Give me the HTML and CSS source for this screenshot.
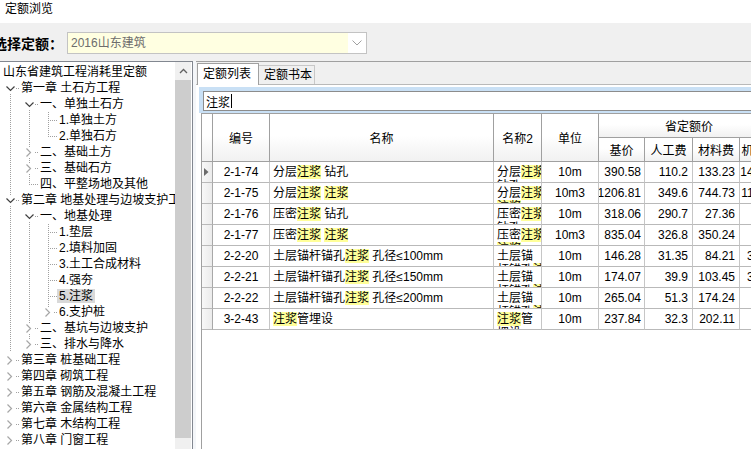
FILE: index.html
```html
<!DOCTYPE html>
<html lang="zh-CN">
<head>
<meta charset="utf-8">
<title>定额浏览</title>
<link rel="stylesheet" href="styles.css">
</head>
<body>
<div class="titlebar">定额浏览</div>
<div class="selectrow">
  <span class="sel-label">选择定额：</span>
  <div class="combo">
    <div class="combo-field">2016山东建筑</div>
    <div class="combo-btn"><svg width="10" height="6" viewBox="0 0 10 6"><path d="M0.5 0.5 5 5 9.5 0.5" fill="none" stroke="#a0a0a0" stroke-width="1"/></svg></div>
  </div>
</div>
<div class="main">
  <div class="treepanel">
    <div class="tree">
      <div class="row root"><span class="t">山东省建筑工程消耗里定额</span></div>
      <div class="row"><span class="c dh"><svg class="chev" width="9" height="9" viewBox="0 0 9 9"><path d="M0.5 2.5 4.5 6.5 8.5 2.5" fill="none" stroke="#404040" stroke-width="1.2"/></svg></span><span class="t">第一章 土石方工程</span></div>
      <div class="row"><span class="c v"></span><span class="c dh"><svg class="chev" width="9" height="9" viewBox="0 0 9 9"><path d="M0.5 2.5 4.5 6.5 8.5 2.5" fill="none" stroke="#404040" stroke-width="1.2"/></svg></span><span class="t">一、单独土石方</span></div>
      <div class="row"><span class="c v"></span><span class="c v"></span><span class="c vh"></span><span class="t">1.单独土方</span></div>
      <div class="row"><span class="c v"></span><span class="c v"></span><span class="c uh"></span><span class="t">2.单独石方</span></div>
      <div class="row"><span class="c v"></span><span class="c vh"><svg class="chev" width="9" height="9" viewBox="0 0 9 9"><path d="M1.5 0.5 5.5 4.5 1.5 8.5" fill="none" stroke="#a6a6a6" stroke-width="1.2"/></svg></span><span class="t">二、基础土方</span></div>
      <div class="row"><span class="c v"></span><span class="c vh"><svg class="chev" width="9" height="9" viewBox="0 0 9 9"><path d="M1.5 0.5 5.5 4.5 1.5 8.5" fill="none" stroke="#a6a6a6" stroke-width="1.2"/></svg></span><span class="t">三、基础石方</span></div>
      <div class="row"><span class="c v"></span><span class="c uh"></span><span class="t">四、平整场地及其他</span></div>
      <div class="row"><span class="c vh"><svg class="chev" width="9" height="9" viewBox="0 0 9 9"><path d="M0.5 2.5 4.5 6.5 8.5 2.5" fill="none" stroke="#404040" stroke-width="1.2"/></svg></span><span class="t">第二章 地基处理与边坡支护工程</span></div>
      <div class="row"><span class="c v"></span><span class="c dh"><svg class="chev" width="9" height="9" viewBox="0 0 9 9"><path d="M0.5 2.5 4.5 6.5 8.5 2.5" fill="none" stroke="#404040" stroke-width="1.2"/></svg></span><span class="t">一、地基处理</span></div>
      <div class="row"><span class="c v"></span><span class="c v"></span><span class="c vh"></span><span class="t">1.垫层</span></div>
      <div class="row"><span class="c v"></span><span class="c v"></span><span class="c vh"></span><span class="t">2.填料加固</span></div>
      <div class="row"><span class="c v"></span><span class="c v"></span><span class="c vh"></span><span class="t">3.土工合成材料</span></div>
      <div class="row"><span class="c v"></span><span class="c v"></span><span class="c vh"></span><span class="t">4.强夯</span></div>
      <div class="row"><span class="c v"></span><span class="c v"></span><span class="c vh"></span><span class="t sel">5.注浆</span></div>
      <div class="row"><span class="c v"></span><span class="c v"></span><span class="c uh"><svg class="chev" width="9" height="9" viewBox="0 0 9 9"><path d="M1.5 0.5 5.5 4.5 1.5 8.5" fill="none" stroke="#a6a6a6" stroke-width="1.2"/></svg></span><span class="t">6.支护桩</span></div>
      <div class="row"><span class="c v"></span><span class="c vh"><svg class="chev" width="9" height="9" viewBox="0 0 9 9"><path d="M1.5 0.5 5.5 4.5 1.5 8.5" fill="none" stroke="#a6a6a6" stroke-width="1.2"/></svg></span><span class="t">二、基坑与边坡支护</span></div>
      <div class="row"><span class="c v"></span><span class="c uh"><svg class="chev" width="9" height="9" viewBox="0 0 9 9"><path d="M1.5 0.5 5.5 4.5 1.5 8.5" fill="none" stroke="#a6a6a6" stroke-width="1.2"/></svg></span><span class="t">三、排水与降水</span></div>
      <div class="row"><span class="c ho"><svg class="chev" width="9" height="9" viewBox="0 0 9 9"><path d="M1.5 0.5 5.5 4.5 1.5 8.5" fill="none" stroke="#a6a6a6" stroke-width="1.2"/></svg></span><span class="t">第三章 桩基础工程</span></div>
      <div class="row"><span class="c ho"><svg class="chev" width="9" height="9" viewBox="0 0 9 9"><path d="M1.5 0.5 5.5 4.5 1.5 8.5" fill="none" stroke="#a6a6a6" stroke-width="1.2"/></svg></span><span class="t">第四章 砌筑工程</span></div>
      <div class="row"><span class="c ho"><svg class="chev" width="9" height="9" viewBox="0 0 9 9"><path d="M1.5 0.5 5.5 4.5 1.5 8.5" fill="none" stroke="#a6a6a6" stroke-width="1.2"/></svg></span><span class="t">第五章 钢筋及混凝土工程</span></div>
      <div class="row"><span class="c ho"><svg class="chev" width="9" height="9" viewBox="0 0 9 9"><path d="M1.5 0.5 5.5 4.5 1.5 8.5" fill="none" stroke="#a6a6a6" stroke-width="1.2"/></svg></span><span class="t">第六章 金属结构工程</span></div>
      <div class="row"><span class="c ho"><svg class="chev" width="9" height="9" viewBox="0 0 9 9"><path d="M1.5 0.5 5.5 4.5 1.5 8.5" fill="none" stroke="#a6a6a6" stroke-width="1.2"/></svg></span><span class="t">第七章 木结构工程</span></div>
      <div class="row"><span class="c ho"><svg class="chev" width="9" height="9" viewBox="0 0 9 9"><path d="M1.5 0.5 5.5 4.5 1.5 8.5" fill="none" stroke="#a6a6a6" stroke-width="1.2"/></svg></span><span class="t">第八章 门窗工程</span></div>
    </div>
    <div class="vscroll">
      <div class="sb-btn"><svg width="9" height="6" viewBox="0 0 9 6"><path d="M1 5 4.5 1.5 8 5" fill="none" stroke="#606060" stroke-width="1.3"/></svg></div>
      <div class="sb-thumb"></div>
    </div>
  </div>
  <div class="splitter"></div>
  <div class="rightpanel">
    <div class="tabstrip">
      <div class="tab active">定额列表</div>
      <div class="tab">定额书本</div>
    </div>
    <div class="tabpage">
      <div class="searchbar"><div class="search-input"><span>注浆</span><span class="caret"></span></div></div>
      <div class="gridbox">
        <div class="dg">
          <div class="hd hs2"></div>
          <div class="hd hs2">编号</div>
          <div class="hd hs2">名称</div>
          <div class="hd hs2">名称2</div>
          <div class="hd hs2">单位</div>
          <div class="hd span4">省定额价</div>
          <div class="hd">基价</div>
          <div class="hd">人工费</div>
          <div class="hd">材料费</div>
          <div class="hd">机械费</div>

          <div class="d ind"><svg width="5" height="8" viewBox="0 0 5 8"><path d="M0 0 4.5 4 0 8z" fill="#6b6b6b"/></svg></div>
          <div class="d dc">2-1-74</div>
          <div class="d dl"><span>分层<span class="hl">注浆</span> 钻孔</span></div>
          <div class="d w"><div>分层<span class="hl">注浆</span></div><div>钻孔</div></div>
          <div class="d dc">10m</div>
          <div class="d dr base">390.58</div>
          <div class="d dr">110.2</div>
          <div class="d dr">133.23</div>
          <div class="d dr mach">147.15</div>

          <div class="d ind"></div>
          <div class="d dc">2-1-75</div>
          <div class="d dl"><span>分层<span class="hl">注浆</span> <span class="hl">注浆</span></span></div>
          <div class="d w"><div>分层<span class="hl">注浆</span></div><div><span class="hl">注浆</span></div></div>
          <div class="d dc">10m3</div>
          <div class="d dr base">1206.81</div>
          <div class="d dr">349.6</div>
          <div class="d dr">744.73</div>
          <div class="d dr mach">112.48</div>

          <div class="d ind"></div>
          <div class="d dc">2-1-76</div>
          <div class="d dl"><span>压密<span class="hl">注浆</span> 钻孔</span></div>
          <div class="d w"><div>压密<span class="hl">注浆</span></div><div>钻孔</div></div>
          <div class="d dc">10m</div>
          <div class="d dr base">318.06</div>
          <div class="d dr">290.7</div>
          <div class="d dr">27.36</div>
          <div class="d dr mach"></div>

          <div class="d ind"></div>
          <div class="d dc">2-1-77</div>
          <div class="d dl"><span>压密<span class="hl">注浆</span> <span class="hl">注浆</span></span></div>
          <div class="d w"><div>压密<span class="hl">注浆</span></div><div><span class="hl">注浆</span></div></div>
          <div class="d dc">10m3</div>
          <div class="d dr base">835.04</div>
          <div class="d dr">326.8</div>
          <div class="d dr">350.24</div>
          <div class="d dr mach">158</div>

          <div class="d ind"></div>
          <div class="d dc">2-2-20</div>
          <div class="d dl"><span>土层锚杆锚孔<span class="hl">注浆</span> 孔径≤100mm</span></div>
          <div class="d w"><div>土层锚</div><div>杆锚孔<span class="hl">注浆</span></div></div>
          <div class="d dc">10m</div>
          <div class="d dr base">146.28</div>
          <div class="d dr">31.35</div>
          <div class="d dr">84.21</div>
          <div class="d dr mach">30.72</div>

          <div class="d ind"></div>
          <div class="d dc">2-2-21</div>
          <div class="d dl"><span>土层锚杆锚孔<span class="hl">注浆</span> 孔径≤150mm</span></div>
          <div class="d w"><div>土层锚</div><div>杆锚孔<span class="hl">注浆</span></div></div>
          <div class="d dc">10m</div>
          <div class="d dr base">174.07</div>
          <div class="d dr">39.9</div>
          <div class="d dr">103.45</div>
          <div class="d dr mach">30.72</div>

          <div class="d ind"></div>
          <div class="d dc">2-2-22</div>
          <div class="d dl"><span>土层锚杆锚孔<span class="hl">注浆</span> 孔径≤200mm</span></div>
          <div class="d w"><div>土层锚</div><div>杆锚孔<span class="hl">注浆</span></div></div>
          <div class="d dc">10m</div>
          <div class="d dr base">265.04</div>
          <div class="d dr">51.3</div>
          <div class="d dr">174.24</div>
          <div class="d dr mach">39.5</div>

          <div class="d ind"></div>
          <div class="d dc">3-2-43</div>
          <div class="d dl"><span><span class="hl">注浆</span>管埋设</span></div>
          <div class="d w"><div><span class="hl">注浆</span>管</div><div>埋设</div></div>
          <div class="d dc">10m</div>
          <div class="d dr base">237.84</div>
          <div class="d dr">32.3</div>
          <div class="d dr">202.11</div>
          <div class="d dr mach">3.43</div>
        </div>
      </div>
    </div>
  </div>
</div>
</body>
</html>
```

FILE: styles.css
```css
* { box-sizing: border-box; margin: 0; padding: 0; }
html, body { width: 751px; height: 449px; overflow: hidden; }
body {
  background: #f0f0f0;
  font-family: "Liberation Sans", "Noto Sans CJK SC", sans-serif;
  font-size: 12px;
  color: #000;
  display: flex;
  flex-direction: column;
}

/* title */
.titlebar { flex: none; height: 23px; background: #fff; padding: 2px 0 0 5px; line-height: 14px; }

/* quota selector */
.selectrow { flex: none; height: 38px; padding-top: 2px; display: flex; align-items: center; }
.sel-label {
  flex: none; width: 74px; margin-left: -7px;
  font-family: "Noto Sans CJK SC", sans-serif; font-size: 14px; font-weight: 700;
  white-space: nowrap; line-height: 20px;
}
.combo { flex: none; width: 300px; height: 22px; border: 1px solid #c3c3c3; background: #fff; display: flex; }
.combo-field { width: 280px; background: #ffffe1; color: #6d6d6d; padding-left: 3px; line-height: 20px; white-space: nowrap; }
.combo-btn { flex: 1; display: flex; align-items: center; justify-content: center; }

/* main split */
.main { flex: 1; min-height: 0; display: flex; }

.treepanel {
  flex: none; width: 193px; display: flex; background: #fff;
  border-top: 1px solid #828790; border-right: 1px solid #828790;
}
.tree { flex: 1; min-width: 0; overflow: hidden; padding-top: 2px; }
.row { height: 16px; display: flex; align-items: center; white-space: nowrap; }
.row.root { padding-left: 1px; }
.t { padding: 0 2px; line-height: 14px; height: 14px; }
.t.sel { background: #d9d9d9; }

.c {
  --dv: repeating-linear-gradient(to bottom, #a0a0a0 0 1px, transparent 1px 2px);
  --dh: repeating-linear-gradient(to right, #a0a0a0 0 1px, transparent 1px 2px);
  flex: none; width: 19px; height: 16px; display: flex; align-items: center;
  background-repeat: no-repeat;
}
.c.v { background-image: var(--dv); background-size: 1px 16px; background-position: 10px 0; }
.c.vh { background-image: var(--dv), var(--dh); background-size: 1px 16px, 9px 1px; background-position: 10px 0, 10px 8px; }
.c.uh { background-image: var(--dv), var(--dh); background-size: 1px 8px, 9px 1px; background-position: 10px 0, 10px 8px; }
.c.dh { background-image: var(--dv), var(--dh); background-size: 1px 8px, 9px 1px; background-position: 10px 8px, 10px 8px; }
.c.ho { background-image: var(--dh); background-size: 9px 1px; background-position: 10px 8px; }
.chev { display: block; margin-left: 6px; background: #fff; }

.vscroll { flex: none; width: 16px; margin-right: 1px; background: #f0f0f0; display: flex; flex-direction: column; }
.sb-btn { flex: none; height: 18px; display: flex; align-items: center; justify-content: center; }
.sb-thumb { flex: none; height: 358px; background: #cdcdcd; }

.splitter { flex: none; width: 3px; background: #f4f6f9; }

.rightpanel {
  flex: 1; min-width: 0; display: flex; flex-direction: column; overflow: hidden;
  border-top: 1px solid #a0a0a0;
}
.tabstrip {
  flex: none; height: 23px; display: flex; align-items: flex-end; padding-left: 1px;
  border-bottom: 1px solid #b9b9b9; background: #f0f0f0;
}
.tab {
  flex: none; width: 56px; height: 19px; line-height: 18px; padding-left: 5px;
  background: #f0f0f0; border-top: 1px solid #c8c8c8; border-right: 1px solid #c8c8c8; white-space: nowrap;
}
.tab.active {
  width: 62px; height: 22px; line-height: 20px; margin-bottom: -1px;
  background: #fff; border: 1px solid #a0a0a0; border-bottom: none;
}

.tabpage { flex: 1; min-height: 0; display: flex; flex-direction: column; background: #fff; padding-left: 3px; }
.searchbar { flex: none; margin-top: 2px; background: #c9e0f5; padding: 4px 0 2px 4px; }
.search-input {
  height: 20px; border: 1px solid #8c8c8c; border-right: none; background: #fff; padding-left: 2px;
  display: flex; align-items: center; white-space: nowrap;
}
.caret { display: inline-block; width: 1px; height: 14px; background: #000; margin-left: 1px; }

.gridbox { flex: 1; min-height: 0; background: #fff; margin-left: 2px; border-left: 1px solid #a0a0a0; overflow: hidden; }

.dg {
  display: grid;
  grid-template-columns: 11px 57px 224px 48px 57px 46px 48px 47px 40px;
  grid-template-rows: 24px 24px repeat(8, 21px);
  width: max-content;
  border-top: 1px solid #a0a0a0;
}
.hd {
  display: flex; align-items: center; justify-content: center;
  border-right: 1px solid #a0a0a0; border-bottom: 1px solid #a0a0a0;
  background: linear-gradient(#ffffff, #ffffff 45%, #f1f1f1);
  white-space: nowrap; overflow: hidden;
}
.hs2 { grid-row: span 2; }
.span4 { grid-column: span 4; }

.d {
  display: flex; align-items: center; overflow: hidden; white-space: nowrap; line-height: 14px;
  border-right: 1px solid #c6c6c6; border-bottom: 1px solid #b9b9b9;
}
.d.ind { background: linear-gradient(to right, #f8f8f8, #ebebeb); border-right-color: #a8a8a8; padding-left: 2px; }
.dc { justify-content: center; }
.dl { padding-left: 3px; }
.dr { justify-content: flex-end; padding-right: 4px; }
.dr.base { padding-right: 3px; }
.dr.mach { padding-right: 2px; }
.d.w { display: block; padding: 3px 0 0 3px; line-height: 14px; }
.d.w > div { height: 14px; }
.hl { background: #ffff99; }
```
